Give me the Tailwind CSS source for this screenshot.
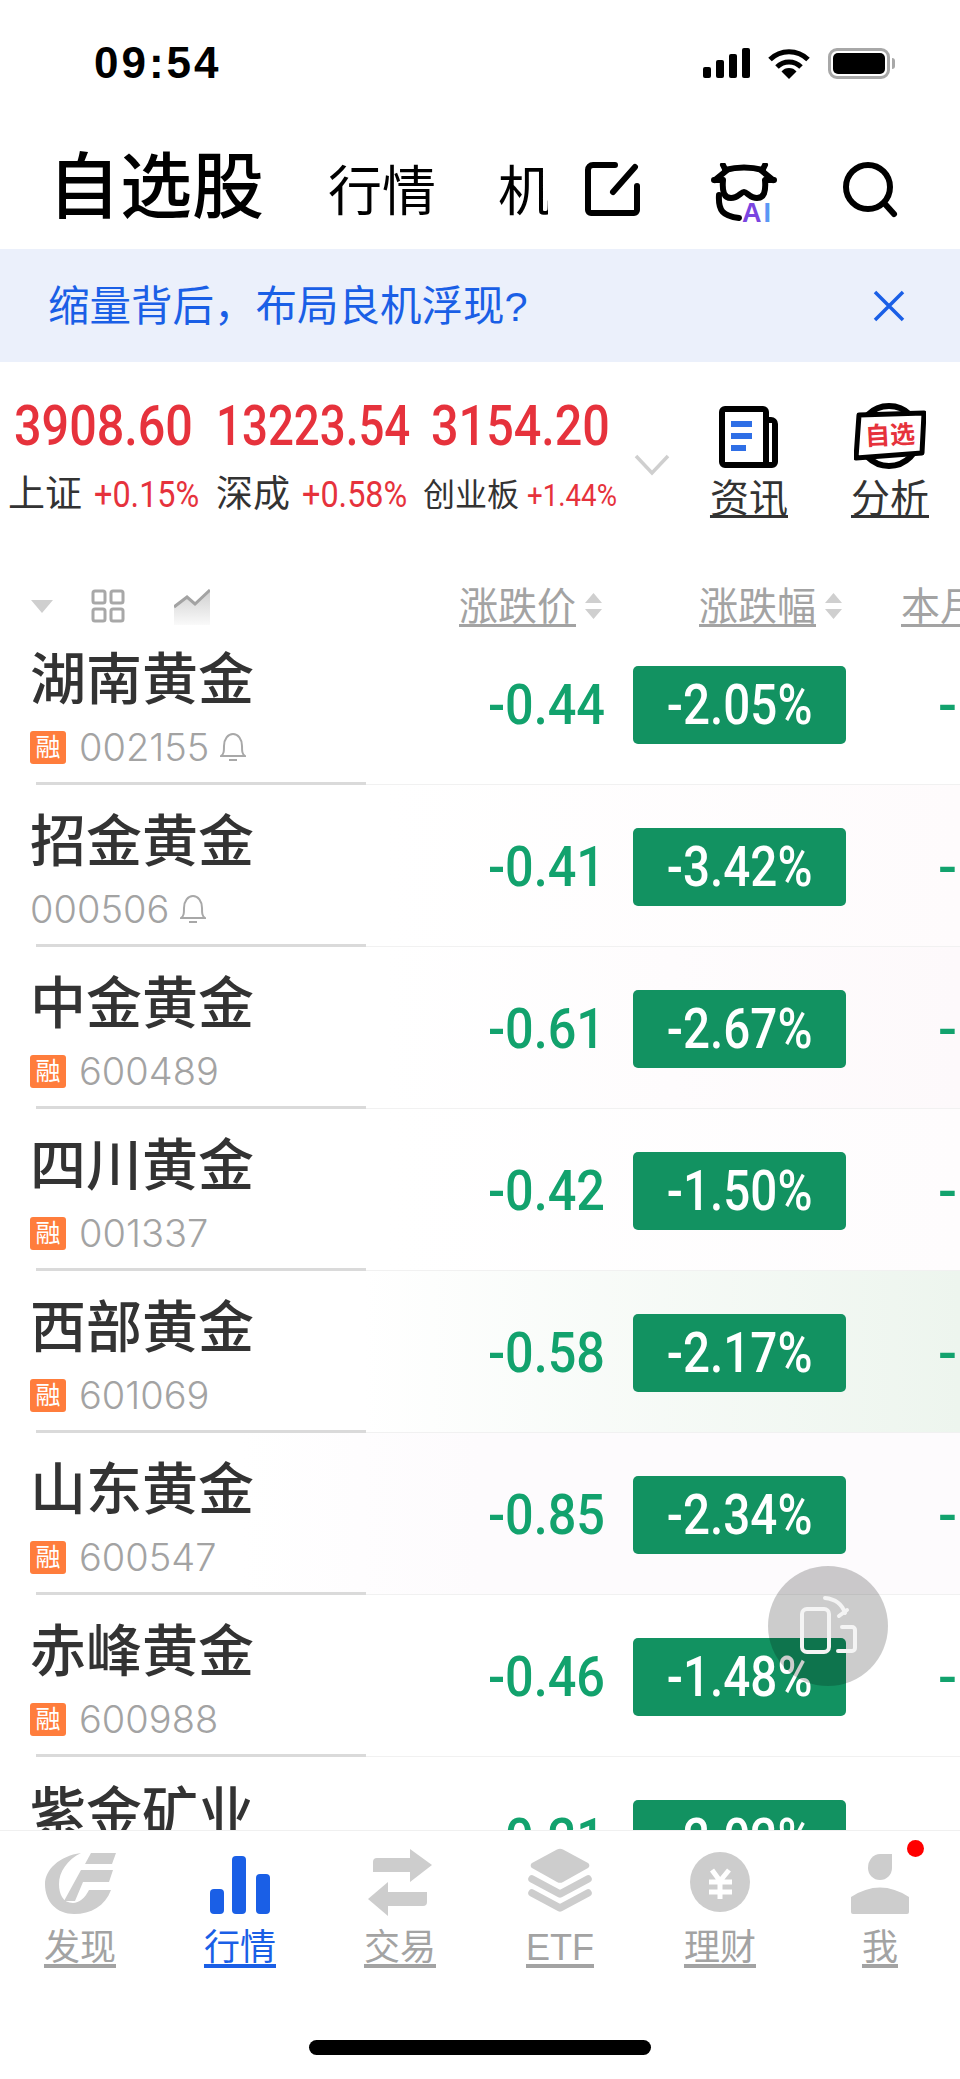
<!doctype html>
<html><head><meta charset="utf-8">
<script src="https://cdn.jsdelivr.net/npm/@tailwindcss/browser@4"></script>
</head>
<body class="m-0 bg-white">
<div class="relative w-[960px] h-[2079px] overflow-hidden flex flex-col bg-white font-['Liberation_Sans','Noto_Sans_CJK_SC',sans-serif] text-[#333]">
  <!-- status -->
  <div class="h-[120px] shrink-0 flex justify-between pl-[94px] pr-[65px] pt-[40px]">
    <div class="text-[44px] leading-[46px] font-bold text-black tracking-[3px]">09:54</div>
    <div class="flex items-center gap-[18px] h-[46px]">
      <svg width="47" height="30" viewBox="0 0 47 30"><rect x="0" y="19" width="8" height="11" rx="2"/><rect x="13" y="12" width="8" height="18" rx="2"/><rect x="26" y="6" width="8" height="24" rx="2"/><rect x="39" y="0" width="8" height="30" rx="2"/></svg>
      <svg width="42" height="31" viewBox="0 0 42 31" fill="none" stroke="#000" stroke-width="5"><path d="M2 11.500a27 27 0 0 1 38 0"/><path d="M9 19a17 17 0 0 1 24 0"/><path d="M21 31l-7.500-7.500a10 10 0 0 1 15 0z" fill="#000" stroke="none"/></svg>
      <div class="flex items-center">
        <div class="w-[62px] h-[31px] rounded-[9px] border-[3px] border-[#a8a8a8] p-[2px]"><div class="w-full h-full bg-black rounded-[5px]"></div></div>
        <div class="w-[3px] h-[11px] rounded-r bg-[#a8a8a8] ml-[2px]"></div>
      </div>
    </div>
  </div>
  <!-- header -->
  <div class="h-[129px] shrink-0 flex items-start relative">
    <div class="ml-[48px] mt-[27px] text-[72px] leading-[80px] font-medium text-black">自选股</div>
    <div class="ml-[64px] mt-[41px] text-[54px] leading-[62px] text-black flex gap-[62px] whitespace-nowrap"><span>行情</span><span class="w-[50px] overflow-hidden">机</span></div>
    <svg class="absolute left-[584px] top-[41px]" width="56" height="56" viewBox="0 0 56 56" fill="none" stroke="#000" stroke-width="6" stroke-linecap="round" stroke-linejoin="round"><path d="M31 4H9a5 5 0 0 0-5 5v40a3 3 0 0 0 3 3h43a3 3 0 0 0 3-3V25"/><path d="M51 6L29 31"/></svg>
    <svg class="absolute left-[711px] top-[43px]" width="66" height="58" viewBox="0 0 66 58" fill="none" stroke="#000" stroke-width="6" stroke-linecap="round" stroke-linejoin="round"><path d="M14 7q19-5 38 0"/><path d="M12 2l3 6-11 9"/><path d="M54 2l-3 6 11 9"/><path d="M3 17h8M55 17h8"/><path d="M12 17c-1 12 1 18 8 18 7 0 10-6 13-6s6 6 13 6c7 0 9-6 8-18"/><path d="M8 32c-1 16 4 21 20 23"/></svg>
    <div class="absolute left-[742px] top-[82px] text-[27px] leading-[22px] font-bold tracking-[2px]"><span class="text-[#7a45e0]">A</span><span class="text-[#5a97f5]">I</span></div>
    <svg class="absolute left-[843px] top-[42px]" width="56" height="58" viewBox="0 0 56 58" fill="none" stroke="#000" stroke-width="6" stroke-linecap="round"><circle cx="25" cy="25" r="22"/><path d="M42 42l9 10"/></svg>
  </div>
  <!-- banner -->
  <div class="h-[113px] shrink-0 bg-[#ebf0fb] flex items-center justify-between pl-[48px] pr-[55px]">
    <span class="text-[41.500px] pt-[3px] text-[#1a5fe6]">缩量背后，布局良机浮现?</span>
    <svg width="32" height="32" viewBox="0 0 32 32" stroke="#1a5fe6" stroke-width="3.500"><path d="M2 2l28 28M30 2L2 30"/></svg>
  </div>
  <!-- indices -->
  <div class="h-[228px] shrink-0 relative flex">
    <div class="pt-[36px] w-[634px] shrink-0">
      <div class="flex text-[#e6323c] font-['Roboto',sans-serif] font-medium text-[56px] leading-[56px] whitespace-nowrap">
        <span class="ml-[14px] w-[202px] inline-block origin-left scale-x-[.866]">3908.60</span><span class="w-[215px] inline-block origin-left scale-x-[.815]">13223.54</span><span class="inline-block origin-left scale-x-[.866]">3154.20</span>
      </div>
      <div class="flex items-center h-[48px] mt-[17px] whitespace-nowrap">
        <span class="ml-[8px] text-[37px] w-[86px]">上证</span><span class="text-[#e6323c] text-[36px] w-[122px] inline-block origin-left scale-x-[.9] font-['Roboto',sans-serif]">+0.15%</span>
        <span class="text-[37px] w-[86px]">深成</span><span class="text-[#e6323c] text-[36px] w-[121px] inline-block origin-left scale-x-[.9] font-['Roboto',sans-serif]">+0.58%</span>
        <span class="text-[32px] w-[104px]">创业板</span><span class="text-[#e6323c] text-[32px] inline-block origin-left scale-x-[.865] font-['Roboto',sans-serif]">+1.44%</span>
      </div>
    </div>
    <svg class="mt-[92px] shrink-0" width="36" height="22" viewBox="0 0 36 22" fill="none" stroke="#cfcfcf" stroke-width="3.500"><path d="M2 2l16 17L34 2"/></svg>
    <div class="absolute left-[699px] top-[44px] w-[100px] flex flex-col items-center">
      <svg width="60" height="62" viewBox="0 0 60 62"><path d="M6 0h38a6 6 0 0 1 6 6v5h2a7 7 0 0 1 7 7v38a6 6 0 0 1-6 6H6a6 6 0 0 1-6-6V6a6 6 0 0 1 6-6z" fill="#000"/><rect x="6" y="6" width="38" height="50" fill="#fff"/><rect x="50" y="17" width="3" height="39" fill="#fff"/><path d="M47 11v33" stroke="#000" stroke-width="5" stroke-linecap="round"/><rect x="12" y="15" width="21" height="6" fill="#2f6fe6"/><rect x="12" y="27" width="21" height="6" fill="#2f6fe6"/><rect x="12" y="39" width="15" height="6" fill="#2f6fe6"/></svg>
      <span class="text-[39px] leading-[44px] mt-[9px] underline decoration-[3px] underline-offset-[3px]">资讯</span>
    </div>
    <div class="absolute left-[840px] top-[41px] w-[100px] flex flex-col items-center">
      <div class="relative w-[72px] h-[66px]">
        <svg class="absolute inset-0" width="72" height="66" viewBox="0 0 72 66"><circle cx="35" cy="33" r="30" fill="#fff" stroke="#000" stroke-width="6"/><path d="M5 12L70 10 68 50 2 55z" fill="#fff" stroke="#000" stroke-width="5" stroke-linejoin="round"/></svg>
        <span class="absolute left-[11px] top-[17px] text-[25px] leading-[30px] font-bold text-[#e6323c] -rotate-3 whitespace-nowrap">自选</span>
      </div>
      <span class="text-[39px] leading-[44px] mt-[8px] underline decoration-[3px] underline-offset-[3px]">分析</span>
    </div>
  </div>
  <!-- table head -->
  <div class="h-[33px] shrink-0 relative z-10 flex items-start text-[39px] leading-[44px] text-[#a3a3a3] whitespace-nowrap">
    <svg class="ml-[31px] mt-[10px] shrink-0" width="22" height="13" viewBox="0 0 22 13"><path d="M0 0h22L11 13z" fill="#cfcfcf"/></svg>
    <svg class="ml-[38px] mt-[-1px] shrink-0" width="34" height="34" viewBox="0 0 34 34" fill="none" stroke="#a8a8a8" stroke-width="3"><rect x="2" y="2" width="12" height="12" rx="2"/><rect x="20" y="2" width="12" height="12" rx="2"/><rect x="2" y="20" width="12" height="12" rx="2"/><rect x="20" y="20" width="12" height="12" rx="2"/></svg>
    <svg class="ml-[49px] mt-[-1px] shrink-0" width="36" height="36" viewBox="0 0 36 36"><defs><linearGradient id="g" x1="0" y1="0" x2="0" y2="1"><stop offset="0" stop-color="#cfcfcf"/><stop offset="1" stop-color="#fafafa"/></linearGradient></defs><path d="M0 18L13 8l8 7L36 1v35H0z" fill="url(#g)"/><path d="M0 18L13 8l8 7L36 1" fill="none" stroke="#a3a3a3" stroke-width="3"/></svg>
    <span class="absolute left-[459px] top-[-5px] underline decoration-[3px] underline-offset-[4px]">涨跌价</span>
    <svg class="absolute left-[585px] top-[3px]" width="17" height="26" viewBox="0 0 17 26"><path d="M8.500 0L17 10H0zM0 16h17L8.500 26z" fill="#cfcfcf"/></svg>
    <span class="absolute left-[699px] top-[-5px] underline decoration-[3px] underline-offset-[4px]">涨跌幅</span>
    <svg class="absolute left-[825px] top-[3px]" width="17" height="26" viewBox="0 0 17 26"><path d="M8.500 0L17 10H0zM0 16h17L8.500 26z" fill="#cfcfcf"/></svg>
    <span class="absolute left-[901px] top-[-5px] underline decoration-[3px] underline-offset-[4px]">本月</span>
  </div>
  <!-- rows -->
  <div class="flex-1 min-h-0 overflow-hidden">

    <div class="h-[162px] flex flex-col bg-white">
      <div class="h-[159px] flex items-start">
        <div class="w-[400px] shrink-0 pl-[30px] pt-[25px]"><div class="text-[56px] leading-[64px] font-medium whitespace-nowrap">湖南黄金</div>
          <div class="flex items-center h-[34px] mt-[18px]"><span class="w-[36px] h-[33px] bg-[#ff7d3c] rounded-[3px] text-white text-[25px] leading-[33px] text-center">融</span><span class="ml-[13px] font-['Inter',sans-serif] font-light text-[38px] text-[#a3a3a3]">002155</span><svg class="ml-[11px]" width="26" height="30" viewBox="0 0 26 30" fill="none" stroke="#a8a8a8" stroke-width="2"><path d="M1 24c3-2 3-5 3-10 0-7 4-12 9-12s9 5 9 12c0 5 0 8 3 10z"/><path d="M9 28h8"/></svg></div>
        </div>
        <span class="w-[205px] text-right mt-[51px] inline-block origin-right scale-x-[.9] font-['Roboto',sans-serif] font-medium text-[56px] leading-[62px] text-[#12a26d]">-0.44</span>
        <div class="ml-[28px] mt-[43px] w-[213px] h-[78px] bg-[#129261] rounded-[5px] flex items-center justify-center"><span class="inline-block scale-x-[.85] font-['Roboto',sans-serif] font-medium text-white text-[56px] leading-[78px] whitespace-nowrap">-2.05%</span></div>
        <span class="ml-[92px] mt-[51px] font-['Roboto',sans-serif] font-medium text-[56px] leading-[62px] text-[#12a26d]">-</span>
      </div>
      <div class="h-[3px] flex items-end"><div class="ml-[36px] w-[330px] h-[3px] bg-[#dadada]"></div><div class="flex-1 h-px bg-[#f1f1f1]"></div></div>
    </div>

    <div class="h-[162px] flex flex-col bg-linear-to-r from-white from-[40%] to-[#fefbfc]">
      <div class="h-[159px] flex items-start">
        <div class="w-[400px] shrink-0 pl-[30px] pt-[25px]"><div class="text-[56px] leading-[64px] font-medium whitespace-nowrap">招金黄金</div>
          <div class="flex items-center h-[34px] mt-[18px]"><span class="font-['Inter',sans-serif] font-light text-[38px] text-[#a3a3a3]">000506</span><svg class="ml-[11px]" width="26" height="30" viewBox="0 0 26 30" fill="none" stroke="#a8a8a8" stroke-width="2"><path d="M1 24c3-2 3-5 3-10 0-7 4-12 9-12s9 5 9 12c0 5 0 8 3 10z"/><path d="M9 28h8"/></svg></div>
        </div>
        <span class="w-[205px] text-right mt-[51px] inline-block origin-right scale-x-[.9] font-['Roboto',sans-serif] font-medium text-[56px] leading-[62px] text-[#12a26d]">-0.41</span>
        <div class="ml-[28px] mt-[43px] w-[213px] h-[78px] bg-[#129261] rounded-[5px] flex items-center justify-center"><span class="inline-block scale-x-[.85] font-['Roboto',sans-serif] font-medium text-white text-[56px] leading-[78px] whitespace-nowrap">-3.42%</span></div>
        <span class="ml-[92px] mt-[51px] font-['Roboto',sans-serif] font-medium text-[56px] leading-[62px] text-[#12a26d]">-</span>
      </div>
      <div class="h-[3px] flex items-end"><div class="ml-[36px] w-[330px] h-[3px] bg-[#dadada]"></div><div class="flex-1 h-px bg-[#f1f1f1]"></div></div>
    </div>

    <div class="h-[162px] flex flex-col bg-linear-to-r from-white from-[40%] to-[#fdf9fb]">
      <div class="h-[159px] flex items-start">
        <div class="w-[400px] shrink-0 pl-[30px] pt-[25px]"><div class="text-[56px] leading-[64px] font-medium whitespace-nowrap">中金黄金</div>
          <div class="flex items-center h-[34px] mt-[18px]"><span class="w-[36px] h-[33px] bg-[#ff7d3c] rounded-[3px] text-white text-[25px] leading-[33px] text-center">融</span><span class="ml-[13px] font-['Inter',sans-serif] font-light text-[38px] text-[#a3a3a3]">600489</span></div>
        </div>
        <span class="w-[205px] text-right mt-[51px] inline-block origin-right scale-x-[.9] font-['Roboto',sans-serif] font-medium text-[56px] leading-[62px] text-[#12a26d]">-0.61</span>
        <div class="ml-[28px] mt-[43px] w-[213px] h-[78px] bg-[#129261] rounded-[5px] flex items-center justify-center"><span class="inline-block scale-x-[.85] font-['Roboto',sans-serif] font-medium text-white text-[56px] leading-[78px] whitespace-nowrap">-2.67%</span></div>
        <span class="ml-[92px] mt-[51px] font-['Roboto',sans-serif] font-medium text-[56px] leading-[62px] text-[#12a26d]">-</span>
      </div>
      <div class="h-[3px] flex items-end"><div class="ml-[36px] w-[330px] h-[3px] bg-[#dadada]"></div><div class="flex-1 h-px bg-[#f1f1f1]"></div></div>
    </div>

    <div class="h-[162px] flex flex-col bg-linear-to-r from-white from-[40%] to-[#fefcfd]">
      <div class="h-[159px] flex items-start">
        <div class="w-[400px] shrink-0 pl-[30px] pt-[25px]"><div class="text-[56px] leading-[64px] font-medium whitespace-nowrap">四川黄金</div>
          <div class="flex items-center h-[34px] mt-[18px]"><span class="w-[36px] h-[33px] bg-[#ff7d3c] rounded-[3px] text-white text-[25px] leading-[33px] text-center">融</span><span class="ml-[13px] font-['Inter',sans-serif] font-light text-[38px] text-[#a3a3a3]">001337</span></div>
        </div>
        <span class="w-[205px] text-right mt-[51px] inline-block origin-right scale-x-[.9] font-['Roboto',sans-serif] font-medium text-[56px] leading-[62px] text-[#12a26d]">-0.42</span>
        <div class="ml-[28px] mt-[43px] w-[213px] h-[78px] bg-[#129261] rounded-[5px] flex items-center justify-center"><span class="inline-block scale-x-[.85] font-['Roboto',sans-serif] font-medium text-white text-[56px] leading-[78px] whitespace-nowrap">-1.50%</span></div>
        <span class="ml-[92px] mt-[51px] font-['Roboto',sans-serif] font-medium text-[56px] leading-[62px] text-[#12a26d]">-</span>
      </div>
      <div class="h-[3px] flex items-end"><div class="ml-[36px] w-[330px] h-[3px] bg-[#dadada]"></div><div class="flex-1 h-px bg-[#f1f1f1]"></div></div>
    </div>

    <div class="h-[162px] flex flex-col bg-linear-to-r from-white from-[38%] to-[#edf5ee]">
      <div class="h-[159px] flex items-start">
        <div class="w-[400px] shrink-0 pl-[30px] pt-[25px]"><div class="text-[56px] leading-[64px] font-medium whitespace-nowrap">西部黄金</div>
          <div class="flex items-center h-[34px] mt-[18px]"><span class="w-[36px] h-[33px] bg-[#ff7d3c] rounded-[3px] text-white text-[25px] leading-[33px] text-center">融</span><span class="ml-[13px] font-['Inter',sans-serif] font-light text-[38px] text-[#a3a3a3]">601069</span></div>
        </div>
        <span class="w-[205px] text-right mt-[51px] inline-block origin-right scale-x-[.9] font-['Roboto',sans-serif] font-medium text-[56px] leading-[62px] text-[#12a26d]">-0.58</span>
        <div class="ml-[28px] mt-[43px] w-[213px] h-[78px] bg-[#129261] rounded-[5px] flex items-center justify-center"><span class="inline-block scale-x-[.85] font-['Roboto',sans-serif] font-medium text-white text-[56px] leading-[78px] whitespace-nowrap">-2.17%</span></div>
        <span class="ml-[92px] mt-[51px] font-['Roboto',sans-serif] font-medium text-[56px] leading-[62px] text-[#12a26d]">-</span>
      </div>
      <div class="h-[3px] flex items-end"><div class="ml-[36px] w-[330px] h-[3px] bg-[#dadada]"></div><div class="flex-1 h-px bg-[#f1f1f1]"></div></div>
    </div>

    <div class="h-[162px] flex flex-col bg-linear-to-r from-white from-[25%] to-[#fdfbfd] to-[50%]">
      <div class="h-[159px] flex items-start">
        <div class="w-[400px] shrink-0 pl-[30px] pt-[25px]"><div class="text-[56px] leading-[64px] font-medium whitespace-nowrap">山东黄金</div>
          <div class="flex items-center h-[34px] mt-[18px]"><span class="w-[36px] h-[33px] bg-[#ff7d3c] rounded-[3px] text-white text-[25px] leading-[33px] text-center">融</span><span class="ml-[13px] font-['Inter',sans-serif] font-light text-[38px] text-[#a3a3a3]">600547</span></div>
        </div>
        <span class="w-[205px] text-right mt-[51px] inline-block origin-right scale-x-[.9] font-['Roboto',sans-serif] font-medium text-[56px] leading-[62px] text-[#12a26d]">-0.85</span>
        <div class="ml-[28px] mt-[43px] w-[213px] h-[78px] bg-[#129261] rounded-[5px] flex items-center justify-center"><span class="inline-block scale-x-[.85] font-['Roboto',sans-serif] font-medium text-white text-[56px] leading-[78px] whitespace-nowrap">-2.34%</span></div>
        <span class="ml-[92px] mt-[51px] font-['Roboto',sans-serif] font-medium text-[56px] leading-[62px] text-[#12a26d]">-</span>
      </div>
      <div class="h-[3px] flex items-end"><div class="ml-[36px] w-[330px] h-[3px] bg-[#dadada]"></div><div class="flex-1 h-px bg-[#f1f1f1]"></div></div>
    </div>

    <div class="h-[162px] flex flex-col bg-white">
      <div class="h-[159px] flex items-start">
        <div class="w-[400px] shrink-0 pl-[30px] pt-[25px]"><div class="text-[56px] leading-[64px] font-medium whitespace-nowrap">赤峰黄金</div>
          <div class="flex items-center h-[34px] mt-[18px]"><span class="w-[36px] h-[33px] bg-[#ff7d3c] rounded-[3px] text-white text-[25px] leading-[33px] text-center">融</span><span class="ml-[13px] font-['Inter',sans-serif] font-light text-[38px] text-[#a3a3a3]">600988</span></div>
        </div>
        <span class="w-[205px] text-right mt-[51px] inline-block origin-right scale-x-[.9] font-['Roboto',sans-serif] font-medium text-[56px] leading-[62px] text-[#12a26d]">-0.46</span>
        <div class="ml-[28px] mt-[43px] w-[213px] h-[78px] bg-[#129261] rounded-[5px] flex items-center justify-center"><span class="inline-block scale-x-[.85] font-['Roboto',sans-serif] font-medium text-white text-[56px] leading-[78px] whitespace-nowrap">-1.48%</span></div>
        <span class="ml-[92px] mt-[51px] font-['Roboto',sans-serif] font-medium text-[56px] leading-[62px] text-[#12a26d]">-</span>
      </div>
      <div class="h-[3px] flex items-end"><div class="ml-[36px] w-[330px] h-[3px] bg-[#dadada]"></div><div class="flex-1 h-px bg-[#f1f1f1]"></div></div>
    </div>

    <div class="h-[162px] flex flex-col bg-white">
      <div class="h-[159px] flex items-start">
        <div class="w-[400px] shrink-0 pl-[30px] pt-[25px]"><div class="text-[56px] leading-[64px] font-medium whitespace-nowrap">紫金矿业</div></div>
        <span class="w-[205px] text-right mt-[51px] inline-block origin-right scale-x-[.9] font-['Roboto',sans-serif] font-medium text-[56px] leading-[62px] text-[#12a26d]">-0.21</span>
        <div class="ml-[28px] mt-[43px] w-[213px] h-[78px] bg-[#129261] rounded-[5px] flex items-center justify-center"><span class="inline-block scale-x-[.85] font-['Roboto',sans-serif] font-medium text-white text-[56px] leading-[78px] whitespace-nowrap">-2.02%</span></div>
      </div>
    </div>
  </div>
  <!-- tab bar -->
  <div class="h-[249px] shrink-0 bg-white border-t border-[#f0f0f0] pt-[17px]">
    <div class="grid grid-cols-6 text-[36px] leading-[44px] text-[#a3a3a3]">
      <div class="flex flex-col items-center">
        <div class="h-[70px] mb-[8px]"><svg class="mt-[4px]" width="71" height="62" viewBox="0 0 71 62" fill="#cdcdcd"><path d="M36 1C14 4 0 18 0 32C0 50 12 62 29 62C46 62 60 54 66 38H44C40 46 34 51 28 51C18 51 14 42 14 32C14 20 22 8 36 1Z"/><path d="M46 1H71L67 12H40Z"/><path d="M36 18H68L64 30H38L30 49H19Z"/></svg></div>
        <span class="underline decoration-[4px] underline-offset-[4px]">发现</span>
      </div>
      <div class="flex flex-col items-center text-[#1a5fe6]">
        <div class="h-[70px] mb-[8px]"><svg class="mt-[8px]" width="60" height="58" viewBox="0 0 60 58" fill="#1a5fe6"><rect x="0" y="33" width="14" height="25" rx="4"/><rect x="22" y="0" width="14" height="58" rx="4"/><rect x="46" y="18" width="14" height="40" rx="4"/></svg></div>
        <span class="underline decoration-[4px] underline-offset-[4px]">行情</span>
      </div>
      <div class="flex flex-col items-center">
        <div class="h-[70px] mb-[8px]"><svg width="64" height="68" viewBox="0 0 64 68" fill="#cdcdcd"><path d="M42 1L64 17 42 34V24H5V14a4 4 0 0 1 4-4H42Z"/><path d="M20 34L0 51 20 68V58H55a4 4 0 0 0 4-4V44H20Z"/></svg></div>
        <span class="underline decoration-[4px] underline-offset-[4px]">交易</span>
      </div>
      <div class="flex flex-col items-center">
        <div class="h-[70px] mb-[8px]"><svg width="64" height="66" viewBox="0 0 64 66"><path d="M29 1.500a6 6 0 0 1 6 0L60 15a3 3 0 0 1 0 5L35 34a6 6 0 0 1-6 0L4 20a3 3 0 0 1 0-5z" fill="#cdcdcd"/><path d="M4 31l28 15 28-15M4 45l28 15 28-15" fill="none" stroke="#cdcdcd" stroke-width="7.500" stroke-linecap="round" stroke-linejoin="round"/></svg></div>
        <span class="underline decoration-[4px] underline-offset-[4px]">ETF</span>
      </div>
      <div class="flex flex-col items-center">
        <div class="h-[70px] mb-[8px]"><svg class="mt-[4px]" width="60" height="60" viewBox="0 0 60 60"><circle cx="30" cy="30" r="30" fill="#cdcdcd"/><path d="M22 18l8 11 9-11M19 30h23M19 40h23M30 29v18" fill="none" stroke="#fff" stroke-width="5"/></svg></div>
        <span class="underline decoration-[4px] underline-offset-[4px]">理财</span>
      </div>
      <div class="relative flex flex-col items-center">
        <div class="h-[70px] mb-[8px]"><svg class="mt-[6px]" width="58" height="60" viewBox="0 0 58 60" fill="#cdcdcd"><path d="M29 0H41V14A12 12 0 0 1 17 14A12 14 0 0 1 29 0Z"/><path d="M0 43Q29 24 58 43V58a2 2 0 0 1-2 2H2a2 2 0 0 1-2-2Z"/></svg></div>
        <span class="underline decoration-[4px] underline-offset-[4px]">我</span>
        <div class="absolute left-[107px] top-[-8px] w-[17px] h-[17px] rounded-full bg-[#ff0000]"></div>
      </div>
    </div>
    <div class="mt-[70px] mx-auto w-[342px] h-[15px] rounded-[8px] bg-black"></div>
  </div>
  <!-- floating button -->
  <div class="absolute left-[768px] top-[1566px] w-[120px] h-[120px] rounded-full bg-black/20 flex items-center justify-center">
    <svg width="64" height="64" viewBox="0 0 64 64" fill="none" stroke="#f4f4f4" stroke-width="4" stroke-linecap="round"><rect x="6" y="15" width="27" height="43" rx="5"/><path d="M42 57H56a3 3 0 0 0 3-3V36a3 3 0 0 0-3-3H46"/><path d="M29 4c10 1 17 6 20 15"/><path d="M43 22l8-6"/></svg>
  </div>
</div>
</body></html>
